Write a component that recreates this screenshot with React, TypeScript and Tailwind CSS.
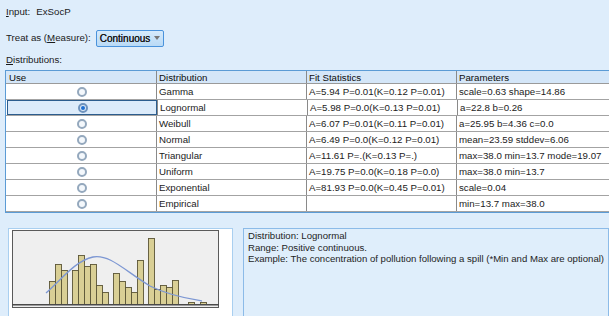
import React from "react";

const rows = [
  { use: false, dist: "Gamma", fit: "A=5.94 P=0.01(K=0.12 P=0.01)", params: "scale=0.63 shape=14.86" },
  { use: true, dist: "Lognormal", fit: "A=5.98 P=0.0(K=0.13 P=0.01)", params: "a=22.8 b=0.26" },
  { use: false, dist: "Weibull", fit: "A=6.07 P=0.01(K=0.11 P=0.01)", params: "a=25.95 b=4.36 c=0.0" },
  { use: false, dist: "Normal", fit: "A=6.49 P=0.0(K=0.12 P=0.01)", params: "mean=23.59 stddev=6.06" },
  { use: false, dist: "Triangular", fit: "A=11.61 P=.(K=0.13 P=.)", params: "max=38.0 min=13.7 mode=19.07" },
  { use: false, dist: "Uniform", fit: "A=19.75 P=0.0(K=0.18 P=0.0)", params: "max=38.0 min=13.7" },
  { use: false, dist: "Exponential", fit: "A=81.93 P=0.0(K=0.45 P=0.01)", params: "scale=0.04" },
  { use: false, dist: "Empirical", fit: "", params: "min=13.7 max=38.0" },
];

const bars: [number, number][] = [
  [49, 282], [55, 265], [61, 271],
  [72, 271], [78, 256], [84, 267], [90, 265], [96, 286], [102, 293],
  [113, 274], [119, 282], [125, 288], [131, 293], [137, 261],
  [148, 239], [154, 290], [160, 286], [166, 288], [172, 281],
  [188, 303], [200, 303],
];

function Radio({ on }: { on: boolean }) {
  return (
    <span
      className={
        "relative flex h-[10px] w-[10px] items-center justify-center rounded-full border-2 " +
        (on ? "border-[#6f93bd] bg-[#dbe8f5]" : "border-[#94a8bd] bg-[#f4f8fc]")
      }
    >
      {on && <span className="h-[4px] w-[4px] rounded-full bg-[#1f6fd1]" />}
    </span>
  );
}

export default function App() {
  return (
    <div className="h-[316px] w-[609px] overflow-hidden whitespace-nowrap bg-[#deedfb] font-['Liberation_Sans',Arial,sans-serif] text-[9.7px] text-[#1b1b1b]">
      <div className="pl-[6px] pt-[5px]">
        <div className="flex h-[14px] items-center leading-[14px]">
          <span>
            <span className="underline">I</span>nput:
          </span>
          <span className="ml-[6px]">ExSocP</span>
        </div>
        <div className="mt-[10px] flex h-[18px] items-center">
          <span>
            Treat as (<span className="underline">M</span>easure):
          </span>
          <div className="ml-[5px] flex h-[17px] w-[68px] items-center rounded-[2px] border border-[#4a93dc] bg-[linear-gradient(#d6eafb,#b9daf6)] pl-[3px] text-[10px] text-[#111] [text-shadow:0_0_0.2px_#333]">
            <span>Continuous</span>
            <span className="ml-[4px] h-0 w-0 border-x-[3.5px] border-t-[4px] border-x-transparent border-t-[#777]" />
          </div>
        </div>
        <div className="mt-[6px] flex h-[14px] items-center">
          <span>
            <span className="underline">D</span>istributions:
          </span>
        </div>
      </div>

      <div className="ml-[5px] mt-[3px] w-[604px] overflow-hidden border-y border-l border-[#5b9bd5] bg-white">
        <div className="flex h-[13px] w-[640px] items-center border-b border-[#9a9a9a] bg-[#d4e6f8] leading-[13px] text-[#0d0d0d]">
          <div className="h-full w-[151px] border-r border-[#8a8a8a] pl-[3px]">Use</div>
          <div className="h-full w-[150px] border-r border-[#8a8a8a] pl-[2px]">Distribution</div>
          <div className="h-full w-[150px] border-r border-[#8a8a8a] pl-[2px]">Fit Statistics</div>
          <div className="h-full flex-1 pl-[2px]">Parameters</div>
        </div>
        {rows.map((r) => (
          <div
            key={r.dist}
            className="flex h-[16px] w-[640px] border-b border-[#a3a3a3] leading-[16px]"
          >
            <div
              className={
                "flex h-full w-[151px] items-center justify-center border-r border-[#8a8a8a] " +
                (r.use ? "ml-[1px] w-[150px] bg-[#dcebfa] shadow-[inset_0_0_0_1px_#2c5d8e]" : "")
              }
            >
              <span className={r.use ? "ml-[1px]" : "ml-[2px]"}>
                <Radio on={r.use} />
              </span>
            </div>
            <div className="h-full w-[150px] border-r border-[#8a8a8a] pl-[2px]">{r.dist}</div>
            <div className="h-full w-[150px] border-r border-[#8a8a8a] pl-[2px]">{r.fit}</div>
            <div className="h-full flex-1 pl-[2px]">{r.params}</div>
          </div>
        ))}
      </div>

      <div className="mt-[15px] flex">
        <div className="ml-[8px] h-[92px] w-[225px] border border-[#a9cff0] bg-white">
          <svg width="223" height="90" viewBox="9 230 223 90" className="block">
            <rect x="12.5" y="231.5" width="206" height="77" fill="#efefef" stroke="#5a5a5a" strokeWidth="1" />
            {bars.map(([x, t], i) => (
              <rect
                key={i}
                x={x + 0.5}
                y={t + 0.5}
                width={6}
                height={305 - t}
                fill="#d9cf95"
                stroke="#5b5637"
                strokeWidth="0.9"
              />
            ))}
            <path
              d="M46 294 C 62 280, 75 262, 93 258 C 110 255, 125 272, 150 287 C 170 297, 190 300, 202 302"
              fill="none"
              stroke="#7d97d3"
              strokeWidth="1.3"
            />
            <line x1="12" y1="305.8" x2="219" y2="305.8" stroke="#4a4a4a" strokeWidth="1.6" />
          </svg>
        </div>
        <div className="ml-[10px] h-[92px] flex-1 border border-[#8cbbe8] bg-[#dfeefb] pl-[4px] pt-[1px] text-[9.6px] leading-[11.5px] text-[#1e1e1e]">
          <div>Distribution: Lognormal</div>
          <div>Range: Positive continuous.</div>
          <div>Example: The concentration of pollution following a spill (*Min and Max are optional)</div>
        </div>
      </div>
    </div>
  );
}
